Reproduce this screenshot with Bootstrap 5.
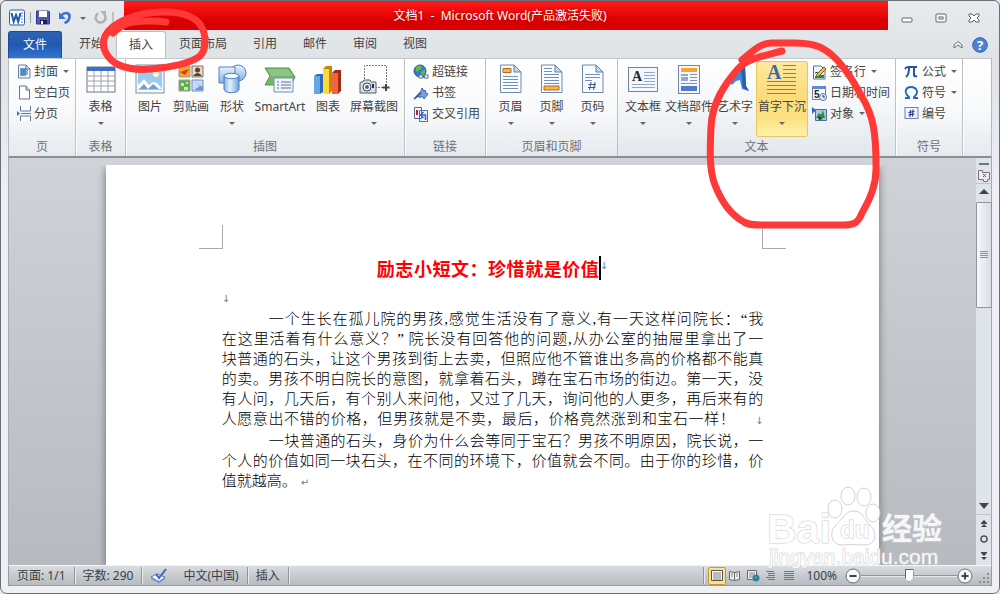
<!DOCTYPE html>
<html lang="zh-CN">
<head>
<meta charset="utf-8">
<meta name="viewport" content="width=device-width, initial-scale=1">
<title>文档1 - Microsoft Word</title>
<link href="https://cdn.jsdelivr.net/npm/bootstrap@5.3.0/dist/css/bootstrap.min.css" rel="stylesheet">
<style>
html,body{height:100%}
body{font-family:"Noto Sans","Noto Sans CJK SC",sans-serif;font-size:12px;line-height:18px;color:#444;background:#e4e7ea;overflow:hidden}
button,a{white-space:nowrap}
button{border:0;background:none;padding:0;color:inherit}
svg{display:block;flex:none}
.window{min-height:100vh;border:1px solid #6b7078;border-radius:6px 6px 7px 7px;padding:0 7px 7px;background:linear-gradient(#e8ebed,#dfe3e6 60px,#eef0f4 200px)}
.titlebar{height:29px}
.quick{width:116px;padding:8px 0 0 1px;gap:4px}
.red-title{height:29px;padding-right:12px;background:linear-gradient(#ff1c1c,#f00c0c 10px,#d80000 20px,#d80000);color:#fff;text-shadow:0 0 2px #900;line-height:30px}
.win-btns{width:104px;padding:10px 12px 0 13px}
.tabs{height:28px;padding-top:1px}
.tabs a{color:#3d4248;text-decoration:none;line-height:26px;padding:0 13px;height:27px}
.tabs .file-tab{width:54px;padding:0;margin-right:4px;text-align:center;color:#fff;border:1px solid #1d4a9c;border-bottom:0;border-radius:3px 3px 0 0;background:linear-gradient(#2f62b6,#2358b0 50%,#2f76d2)}
.tabs .open-tab{background:#fff;border:1px solid #b8bec5;border-bottom:0;border-radius:3px 3px 0 0;padding:0 12px}
.ribbon{height:100px;border:1px solid #b4bac1;border-top-color:#c4c9ce;border-bottom:2px solid #8b9097;background:linear-gradient(#fff,#f9fafb 50%,#e6eaee)}
.grp{border-right:1px solid #bcc2c8;box-shadow:1px 0 #fff;flex:none;padding-top:2px}
.grp .tools{height:77px}
.grp-name{text-align:center;color:#6d7278}
.big{display:flex;flex-direction:column;align-items:center;padding-top:3px;height:76px;flex:none}
.big svg.pic{margin-bottom:2px}
.big .caret{margin-top:6px}
.caret{width:0;height:0;border:3px solid transparent;border-top-color:#666;border-bottom:0;flex:none}
.small-btn{display:flex;align-items:center;gap:3px;height:21px}
.small-btn .caret{margin-left:2px}
.lit{background:linear-gradient(#fde9a0,#fcdc7c 45%,#fbe07f 75%,#fff4b0);box-shadow:inset 0 0 0 1px #e9c65b;border-radius:3px}
.w40{width:40px}.w41{width:41px}.w42{width:42px}.w50{width:50px}.w52{width:52px}.w56{width:56px}
.text-grp{background:linear-gradient(#fff,#f4f6f8 50%,#e2e7ec)}
.desk{background:linear-gradient(#cfd2d6,#b7babf);border-left:1px solid #a7abb1;padding-top:7px}
.paper{width:80%;max-width:774px;background:#fff;box-shadow:0 3px 8px #6a6e74;padding:60px 12% 0;clip-path:inset(0 -9px 0 -9px)}
.corner{width:24px;height:24px;border-bottom:1px solid #aaa}
.corner.l{border-right:1px solid #aaa;margin-left:-23px}
.corner.r{border-left:1px solid #aaa;margin-right:-23px}
.doc-title{margin:7px 0 9px;font:bold 18px/24px "Noto Sans CJK SC",sans-serif;color:#f00;white-space:nowrap}
.doc-title .words{width:222px;text-align-last:justify}
.cursor{width:2px;height:24px;margin-right:-1px;background:#000}
.pm{font:normal 10px/20px "DejaVu Sans",sans-serif;color:#777}
.story{font:15px/20px "Liberation Serif","Noto Sans CJK SC",serif;font-weight:300;color:#000;margin:0}
.ln{display:block;text-align-last:justify;white-space:nowrap}
.ln.first{padding-left:47px}
.ln.end{text-align-last:left}
.tail{display:inline-block;width:28px;text-align-last:right}
.scroll{width:16px;background:#dfe4eb;border-right:1px solid #a4a9b0;color:#444}
.thumb{height:106px;border:1px solid #8f959f;border-radius:1px;background:linear-gradient(90deg,#f6f8fa,#d8dde4);width:16px}
.status{height:21px;border:1px solid #969ba2;border-top-color:#f3f4f5;background:linear-gradient(#d9dde1,#c6cbd0 50%,#b7bcc2);color:#3b3f45;line-height:19px}
.cell{border-right:1px solid #90959b;box-shadow:1px 0 #e9ebed;height:17px;line-height:17px}
.view{width:18px;height:18px;display:grid;place-items:center}
.view.on{background:#fbe189;border:1px solid #c89a35;border-radius:2px}
.zoomer{appearance:none;width:96px;height:14px;background:linear-gradient(transparent 6px,#8d949c 6px,#8d949c 7px,#e9ecef 7px,#e9ecef 8px,transparent 8px);margin:0}
.zoomer::-webkit-slider-thumb{appearance:none;width:9px;height:13px;background:#fff;border:1px solid #666;clip-path:polygon(0 0,100% 0,100% 65%,50% 100%,0 65%)}
.over{position:absolute;left:0;top:0;pointer-events:none}
.brand{position:absolute;right:52px;bottom:22px;width:180px;height:88px;pointer-events:none}
.brand text{font-family:"Liberation Sans","Noto Sans CJK SC",sans-serif;fill:#fff;fill-opacity:.88;stroke:#cfd1d4;stroke-width:1;paint-order:stroke}
</style>
</head>
<body>
<!-- shared symbols -->
<svg width="0" height="0" class="position-absolute" aria-hidden="true">
<defs>
<linearGradient id="gb" x2="0" y2="1"><stop stop-color="#e9f3fd"/><stop offset="1" stop-color="#7fb0e6"/></linearGradient>
<linearGradient id="cyl"><stop stop-color="#7fb2ec"/><stop offset=".4" stop-color="#e6f2fe"/><stop offset="1" stop-color="#6da2e0"/></linearGradient>
<symbol id="sheet" viewBox="0 0 24 30"><path d="M1.500 1H15l7 7v20.500H1.500z" fill="#f8fbff" stroke="#7088a8"/><path d="M15 1v7h7z" fill="#c5d9ef" stroke="#5e7da5"/></symbol>
</defs>
</svg>
<div class="window d-flex flex-column">
<header class="titlebar d-flex">
  <div class="quick d-flex align-items-start">
    <svg width="17" height="17" viewBox="0 0 17 17"><rect x=".5" y="1" width="15" height="15" rx="1.500" fill="#fff" stroke="#2a62a5"/><path d="M12 4h2M12 7h2M12 10h2M12 13h2" stroke="#5b8ac4"/><path d="M2.500 4l2.200 8.500L7 6l2.200 6.500L11.500 4" fill="none" stroke="#1d5aa8" stroke-width="2"/></svg>
    <svg width="2" height="16"><path d="M.5 3v11" stroke="#999"/></svg>
    <button aria-label="保存"><svg width="14" height="16" viewBox="0 0 14 16"><path d="M.5 2h12l1 1v12H.500z" fill="#5258b8" stroke="#34388c"/><path d="M3 2h8v6H3z" fill="#fff"/><path d="M4 11h7v4H4z" fill="#1d2246"/><path d="M5 12h2v3H5z" fill="#fff"/></svg></button>
    <button aria-label="撤销" class="ms-1"><svg width="14" height="16" viewBox="0 0 14 16"><path d="M3 7c4-5 9-3 8.500 1S8 13.500 6.500 14" fill="none" stroke="#3d74cb" stroke-width="2.600"/><path d="M1 3v7h7z" fill="#3d74cb"/></svg></button>
    <span class="caret mt-2 mx-1 text-dark"></span>
    <button aria-label="重复"><svg width="14" height="16" viewBox="0 0 14 16"><path d="M4 4c-5 5-1 10 3 9.500S13 9 10 5" fill="none" stroke="#aeb1b5" stroke-width="2.400"/><path d="M6 2h6v6z" fill="#aeb1b5"/></svg></button>
    <svg width="2" height="16"><path d="M1 3v11" stroke="#999"/></svg>
  </div>
  <div class="red-title flex-grow-1 text-center">文档1&nbsp; -&nbsp; Microsoft Word(产品激活失败)</div>
  <div class="win-btns d-flex justify-content-between align-items-start">
    <button aria-label="最小化"><svg width="12" height="14"><rect x="1" y="7" width="10" height="4" rx="1" fill="#fff" stroke="#5e6269"/></svg></button>
    <button aria-label="还原"><svg width="12" height="14"><rect x="1" y="3" width="10" height="8" rx="1" fill="#fff" stroke="#5e6269"/><rect x="4" y="6" width="4" height="2" fill="#fff" stroke="#5e6269"/></svg></button>
    <button aria-label="关闭"><svg width="12" height="14"><path d="M1 3h3l2 2 2-2h3v2L9 7l2 2v2H8L6 9l-2 2H1V9l2-2-2-2z" fill="#fff" stroke="#5e6269"/></svg></button>
  </div>
</header>
<nav class="tabs d-flex" aria-label="功能区选项卡">
  <a href="#" class="file-tab">文件</a><a href="#">开始</a><a href="#" class="open-tab" aria-current="page">插入</a><a href="#">页面布局</a><a href="#">引用</a><a href="#">邮件</a><a href="#">审阅</a><a href="#">视图</a>
  <div class="ms-auto d-flex align-items-center gap-2 pe-1">
    <button aria-label="折叠功能区"><svg width="12" height="12"><path d="M2 6l4-3.500L10 6v3L6 6 2 9z" fill="#fff" stroke="#60656c"/></svg></button>
    <button aria-label="帮助"><svg width="16" height="16"><circle cx="8" cy="8" r="7.300" fill="#4b83d2" stroke="#2e5fae"/><text x="8" y="12.500" text-anchor="middle" font-size="13" font-weight="bold" font-family="Noto Sans" fill="#fff">?</text></svg></button>
  </div>
</nav>
<section class="ribbon d-flex">
  <div class="grp" style="width:67px"><div class="tools ps-2">
    <button class="small-btn"><svg width="14" height="15" viewBox="0 0 14 15"><path d="M1.500 1H9l4 4v9H1.500z" fill="#f2f8ff" stroke="#6482a8"/><path d="M3 4h6v8H3z" fill="#6aa0dd"/><path d="M9 1v4h4M4 6h7M4 8h7M4 10h7" fill="none" stroke="#47729f"/></svg>封面<span class="caret"></span></button>
    <button class="small-btn"><svg width="14" height="15" viewBox="0 0 14 15"><path d="M2.500 1H9l3.500 4v9h-10z" fill="#fff" stroke="#5f7694"/><path d="M9 1v4h3.500" fill="#c5d9ef" stroke="#5f7694"/></svg>空白页</button>
    <button class="small-btn"><svg width="14" height="15" viewBox="0 0 14 15"><path d="M3.500 0v5h10V0M3.500 15v-5h10v5" fill="#fff" stroke="#60789a"/><path d="M4 7.500h10" stroke="#60789a"/><path d="M0 5l3 2.500L0 10z" fill="#3b6fc4"/></svg>分页</button>
  </div><div class="grp-name">页</div></div>
  <div class="grp" style="width:50px"><div class="tools d-flex justify-content-center">
    <button class="big"><svg class="pic" width="30" height="32" viewBox="0 0 30 32"><rect x="1" y="3" width="28" height="25" fill="#fff" stroke="#6c7684"/><path d="M1 3h28v4H1z" fill="#3a6fce"/><path d="M1 12h28M1 17h28M1 22h28M8 7v21M15 7v21M22 7v21" stroke="#9ba4b0"/></svg>表格<span class="caret"></span></button>
  </div><div class="grp-name">表格</div></div>
  <div class="grp" style="width:279px"><div class="tools d-flex ps-1">
    <button class="big w40"><svg class="pic" width="30" height="32" viewBox="0 0 30 32"><rect x="1" y="1" width="28" height="28" fill="#f6f9fc" stroke="#7b91a6"/><rect x="3" y="4" width="24" height="22" fill="#9ccbf2"/><circle cx="21" cy="10" r="3" fill="#fff3c8"/><path d="M3 25v-4l6-6 5 6 4-3 4 1 5 6z" fill="#fff"/><path d="M4 25l5-5 4 5 5-5 6 5z" fill="#6c9fd4"/></svg>图片</button>
    <button class="big w42"><svg class="pic" width="28" height="32" viewBox="0 0 28 32"><path d="M2 2h11v11H2z" fill="#f4a72d" stroke="#999"/><path d="M3 8l9-3-4 6z" fill="#d53b12"/><path d="M15 2h11v11H15z" fill="#f0d8bd" stroke="#777"/><circle cx="20.500" cy="6" r="2.500" fill="#6b3d22"/><path d="M16 12q4.500-6 9 0z" fill="#444"/><path d="M2 16h11v11H2z" fill="#5daa58" stroke="#999"/><path d="M4 19h3v3H4zM9 18h2v2H9zM7 23h4v3H7z" fill="#d7ed7b"/><path d="M15 16h11v11H15z" fill="#c5dcfb" stroke="#6e8fc2"/><path d="M17 18l6 4-6 4 9 0v-3z" fill="#6c92dd"/></svg>剪贴画</button>
    <button class="big w40"><svg class="pic" width="32" height="32" viewBox="0 0 32 32"><circle cx="22" cy="9" r="8" fill="url(#gb)" stroke="#5684bc"/><path d="M3 3h16v16H3z" fill="url(#gb)" stroke="#5684bc"/><path d="M8 12v13c0 5 15 5 15 0V12" fill="url(#cyl)" stroke="#4d7db8"/><ellipse cx="15.500" cy="12" rx="7.500" ry="2.700" fill="#eef7ff" stroke="#4d7db8"/></svg>形状<span class="caret"></span></button>
    <button class="big w56"><svg class="pic" width="34" height="32" viewBox="0 0 34 32"><path d="M2 4h24l6 9-4 8H2l5-9z" fill="#72b46a" stroke="#559448"/><path d="M4 5h21l5 7H8z" fill="#a0d293" opacity=".6"/><path d="M11 14h19v14H11z" fill="#eef5fa" stroke="#7592ae"/><path d="M14 18h2M18 18h10M14 21h2M18 21h10M14 24h2M18 24h10" stroke="#5b7497"/></svg>SmartArt</button>
    <button class="big w40"><svg class="pic" width="30" height="32" viewBox="0 0 30 32"><path d="M1 12l3-2h6v18l-3 2H1z" fill="#2e6bb7"/><path d="M1 12h6v18H1z" fill="#66a6e8"/><path d="M10 5l3-3h6v25l-3 3h-6z" fill="#c08a00"/><path d="M10 5h6v25h-6z" fill="#ffd83c"/><path d="M19 9l3-3h6v21l-3 3h-6z" fill="#a32b15"/><path d="M19 9h6v21h-6z" fill="#ef6541"/></svg>图表</button>
    <button class="big w52"><svg class="pic" width="32" height="32" viewBox="0 0 32 32"><path d="M6.500 15V1.500h22V22M17 23.500h9" fill="none" stroke="#777" stroke-dasharray="2 1"/><path d="M28 20v7M24.500 23.500h7" stroke="#444" stroke-width="2"/><path d="M2 19q0-1 1-1h2l1-2h6l1 2h5v11H2z" fill="#d9dde2" stroke="#555d68"/><circle cx="9" cy="23" r="4" fill="#f7fbff" stroke="#3d4857"/><circle cx="9" cy="23" r="2" fill="#37679f"/><path d="M15 20v4" stroke="#333" stroke-width="2"/></svg>屏幕截图<span class="caret"></span></button>
  </div><div class="grp-name">插图</div></div>
  <div class="grp" style="width:81px"><div class="tools ps-2">
    <button class="small-btn"><svg width="16" height="16" viewBox="0 0 16 16"><circle cx="7" cy="7" r="6" fill="#3f79ca" stroke="#2c5793"/><path d="M3 3q4-3 6 0l-2 3-4 2zM8 8l4-3v4l-3 3z" fill="#62bb50"/><path d="M6 11h4v3H6zM11 11h4v3h-4zM9 12.500h3" fill="#fff" stroke="#526e8e"/></svg>超链接</button>
    <button class="small-btn"><svg width="16" height="16" viewBox="0 0 16 16"><path d="M1 14L8 6l1-3 2 3 1-1 1 3 2 1-4 5-2-3-2 2-1-2z" fill="#7c9de0" stroke="#3e64b4"/><path d="M1 14l7-6" stroke="#3156a2" stroke-width="1.500"/></svg>书签</button>
    <button class="small-btn"><svg width="16" height="16" viewBox="0 0 16 16"><path d="M1.500 1.500h7v11h-7zM6.500 4.500h8v11h-8z" fill="#eef5ff" stroke="#536f99"/><path d="M4 4v5" stroke="#d13" stroke-width="2"/><path d="M12.500 14V9H8M10.500 6L7.500 9l3 3" fill="none" stroke="#2d66c9" stroke-width="1.500"/></svg>交叉引用</button>
  </div><div class="grp-name">链接</div></div>
  <div class="grp" style="width:132px"><div class="tools d-flex ps-1">
    <button class="big w41"><svg class="pic" width="24" height="32" viewBox="0 0 24 32"><use href="#sheet" width="24" height="30"/><path d="M4 4.500h8v4H4z" fill="#f7b357" stroke="#b06a19"/><path d="M4 12.500h15M4 15.500h15M4 18.500h15M4 21.500h15M4 24.500h15" stroke="#7190bd"/></svg>页眉<span class="caret"></span></button>
    <button class="big w41"><svg class="pic" width="24" height="32" viewBox="0 0 24 32"><use href="#sheet" width="24" height="30"/><path d="M4 22h15v4H4z" fill="#f7b357" stroke="#b06a19"/><path d="M4 4.500h8M4 7.500h8M4 10.500h15M4 13.500h15M4 16.500h15M4 19.500h15" stroke="#7190bd"/></svg>页脚<span class="caret"></span></button>
    <button class="big w41"><svg class="pic" width="24" height="32" viewBox="0 0 24 32"><use href="#sheet" width="24" height="30"/><path d="M4 10.500h15M4 13.500h15M4 16.500h7" stroke="#7190bd"/><path d="M10 18L8.500 26M14 18l-1.500 8M7.500 20.500H15M7 23.500h7.500" stroke="#315ba4" fill="none"/></svg>页码<span class="caret"></span></button>
  </div><div class="grp-name">页眉和页脚</div></div>
  <div class="grp text-grp" style="width:278px"><div class="tools d-flex ps-1">
    <button class="big w42"><svg class="pic" width="32" height="32" viewBox="0 0 32 32"><rect x="1.500" y="3.500" width="29" height="24" fill="#f3f8fe" stroke="#73839b"/><path d="M17 8.500h11M17 11.500h11M17 14.500h11M17 17.500h11M5 20.500h23M5 23.500h23" stroke="#92a8c7"/><text x="5" y="17" font-size="14" font-weight="bold" font-family="Liberation Serif" fill="#222">A</text></svg>文本框<span class="caret"></span></button>
    <button class="big w50"><svg class="pic" width="24" height="32" viewBox="0 0 24 32"><rect x="1.500" y="1.500" width="21" height="28" fill="#f5f9ff" stroke="#6e87ab"/><path d="M4 4h16v4H4z" fill="#f9a52b"/><path d="M4 10h7v2H4zM4 13h7v4H4z" fill="#8fa9d0"/><path d="M13 10.500h7M13 13.500h7M13 16.500h7M4 19.500h16" stroke="#7b93ba"/><path d="M4 22h16v5H4z" fill="#4f7cc8"/></svg>文档部件<span class="caret"></span></button>
    <button class="big w42"><svg class="pic" width="32" height="32" viewBox="0 0 32 32"><path d="M10 18L21 6l5-4 1 20 3 5-7-2-2-9-4 1-4 4z" fill="#3f88df"/><path d="M22 5l4-3 1 20 3 5-6-3z" fill="#2460ad"/></svg>艺术字<span class="caret"></span></button>
    <button class="big w52 lit"><svg class="pic" width="32" height="32" viewBox="0 0 32 32"><path d="M17 1.500h13M17 5.500h13M17 9.500h13M17 13.500h13M1 17.500h29M1 21.500h29M1 25.500h29M1 29.500h29" stroke="#5c86c8"/><text x="1" y="15" font-size="20" font-weight="bold" font-family="Liberation Serif" fill="#3d67ae">A</text></svg>首字下沉<span class="caret"></span></button>
    <div class="ps-1">
    <button class="small-btn"><svg width="15" height="16" viewBox="0 0 15 16"><path d="M1.500 2H9l4 4v9H1.500z" fill="#eef4fb" stroke="#607189"/><path d="M3 9q3-2 4 1t5 1" stroke="#333" fill="none"/><path d="M5 10l7-7 2 2-7 7-3 1z" fill="#f5bd3c" stroke="#755f25"/><path d="M3 13h9" stroke="#388a3b" stroke-width="2"/></svg>签名行<span class="caret"></span></button>
    <button class="small-btn"><svg width="15" height="16" viewBox="0 0 15 16"><path d="M.5 1.500h13v13H.500z" fill="#fff" stroke="#6281ae"/><path d="M1 1h13v3H1z" fill="#5d8bcc"/><text x="2" y="13" font-size="10" font-weight="bold" font-family="Liberation Sans" fill="#222">5</text><circle cx="11" cy="12" r="3.500" fill="#e3f0ff" stroke="#54749e"/><path d="M11 10v2h2" stroke="#333" fill="none"/></svg>日期和时间</button>
    <button class="small-btn"><svg width="15" height="16" viewBox="0 0 15 16"><path d="M3.500 3.500h11v11h-11z" fill="#a7c8e8" stroke="#4f6e97"/><path d="M0 1l4 3-4 4z" fill="#2567c7"/><path d="M4 12l3-5 2 2 2-5 2 8z" fill="#348b36"/><path d="M6 10l5 3-4 1z" fill="#173e1c"/></svg>对象<span class="caret"></span></button>
    </div>
  </div><div class="grp-name">文本</div></div>
  <div class="grp" style="width:67px"><div class="tools ps-2">
    <button class="small-btn"><svg width="15" height="15" viewBox="0 0 15 15"><path d="M1 5q1-2 3-2h9M5 4q0 7-3 9M10 4v7q0 2 3 1" fill="none" stroke="#2555a8" stroke-width="2"/></svg>公式<span class="caret"></span></button>
    <button class="small-btn"><svg width="15" height="15" viewBox="0 0 15 15"><path d="M1 13h4v-1C-1 7 2 2 7 2s9 5 3 10v1h4" fill="none" stroke="#2463bd" stroke-width="1.800"/></svg>符号<span class="caret"></span></button>
    <button class="small-btn"><svg width="15" height="15" viewBox="0 0 15 15"><rect x="1" y="1.500" width="13" height="11" fill="#edf4ff" stroke="#6b86ae"/><path d="M6.500 4L6 11M9 3.500L8.500 10.500M4.500 6.500l6-1M4.500 9l6-1" stroke="#252a8a"/></svg>编号</button>
  </div><div class="grp-name">符号</div></div>
</section>
<main class="d-flex flex-grow-1">
  <div class="desk flex-grow-1 d-flex justify-content-center">
    <article class="paper">
      <div class="d-flex justify-content-between"><span class="corner l"></span><span class="corner r"></span></div>
      <h1 class="doc-title d-flex justify-content-center"><span class="words">励志小短文：珍惜就是价值</span><span class="cursor"></span><span class="pm">↓</span></h1>
      <div class="pm">↓</div>
      <p class="story"><span class="ln first">一个生长在孤儿院的男孩,感觉生活没有了意义,有一天这样问院长：“我</span><span class="ln">在这里活着有什么意义？” 院长没有回答他的问题,从办公室的抽屉里拿出了一</span><span class="ln">块普通的石头，让这个男孩到街上去卖，但照应他不管谁出多高的价格都不能真</span><span class="ln">的卖。男孩不明白院长的意图，就拿着石头，蹲在宝石市场的街边。第一天，没</span><span class="ln">有人问，几天后，有个别人来问他，又过了几天，询问他的人更多，再后来有的</span><span class="ln">人愿意出不错的价格，但男孩就是不卖，最后，价格竟然涨到和宝石一样！<span class="pm tail">↓</span></span></p>
      <p class="story"><span class="ln first">一块普通的石头，身价为什么会等同于宝石？男孩不明原因，院长说，一</span><span class="ln">个人的价值如同一块石头，在不同的环境下，价值就会不同。由于你的珍惜，价</span><span class="ln end">值就越高。<span class="pm ps-1">↵</span></span></p>
    </article>
  </div>
  <aside class="scroll d-flex flex-column align-items-center pt-1" aria-label="垂直滚动条">
    <svg width="16" height="40" viewBox="0 0 16 40"><path d="M3 1h10v2H3z" fill="#777"/><path d="M2.500 8.500h4v2h7v7h-2v2h-4v-2h-5z" fill="#f3e9ec" stroke="#777"/><path d="M7 12l3 3M10 12l-3 3" stroke="#8b4a55"/><path d="M0 21.500h16" stroke="#bfc5cd"/><path d="M3 32h10L8 27z" fill="#444"/></svg>
    <div class="thumb d-grid" style="place-items:center"><svg width="8" height="8"><path d="M0 .5h8M0 2.500h8M0 4.500h8M0 6.500h8" stroke="#8c929b"/></svg></div>
    <svg class="mt-auto" width="16" height="64" viewBox="0 0 16 64"><path d="M3 2h10L8 8z" fill="#444"/><path d="M0 13.500h16" stroke="#bfc5cd"/><path d="M5 22l3-3 3 3zM5 26l3-3 3 3zM5 52h6l-3 3zM5 56h6l-3 3zM5 22h6v1H5zM5 51h6v1H5z" fill="#444"/><circle cx="8" cy="38" r="3" fill="none" stroke="#555" stroke-width="1.500"/></svg>
  </aside>
</main>
<footer class="status d-flex align-items-center">
  <span class="cell px-2 text-nowrap">页面: 1/1</span><span class="cell px-2 text-nowrap">字数: 290</span>
  <span class="cell px-2 text-nowrap d-flex"><button aria-label="校对" class="me-3"><svg width="17" height="16" viewBox="0 0 17 16"><path d="M1 9l6-3 8 3-6 5z" fill="#fff" stroke="#5574b6"/><path d="M1 9v2l8 4 6-4V9l-6 4z" fill="#6f90cf"/><path d="M6 6l3 4 7-9" fill="none" stroke="#3868c8" stroke-width="2"/></svg></button>中文(中国)</span>
  <span class="cell px-2 text-nowrap">插入</span>
  <span class="cell ms-auto me-1"></span>
  <button class="view on" aria-label="页面视图"><svg width="12" height="12"><path d="M.5.500h11v10H.500z" fill="#fff" stroke="#555"/><path d="M2 3h8M2 5h8M2 7h8M2 9h8" stroke="#777"/></svg></button>
  <button class="view" aria-label="阅读版式"><svg width="12" height="12"><path d="M.5 1.500l5 1 5-1v8l-5 1-5-1zM5.500 2v8" fill="#eee" stroke="#666"/><path d="M2 4h2M2 6h2M7 4h2M7 6h2" stroke="#888"/></svg></button>
  <button class="view" aria-label="Web 版式"><svg width="13" height="12"><path d="M.5.500h9v9h-9z" fill="#eee" stroke="#666"/><path d="M2 3h6M2 5h6M2 7h6" stroke="#888"/><circle cx="9" cy="8" r="3.500" fill="#347ab4"/><path d="M7 7l3-1v3z" fill="#55aa55"/></svg></button>
  <button class="view" aria-label="大纲视图"><svg width="12" height="12"><path d="M1 1.500h8M3 3.500h7M3 5.500h7M1 7.500h9M3 9.500h7" stroke="#777"/></svg></button>
  <button class="view" aria-label="草稿"><svg width="12" height="12"><path d="M1 1.500h10M1 3.500h10M1 5.500h10M1 7.500h10M1 9.500h10" stroke="#777"/></svg></button>
  <button class="ms-2 me-2">100%</button>
  <button aria-label="缩小"><svg width="16" height="16"><circle cx="8" cy="8" r="7" fill="#f5f6f7" stroke="#6a6e74"/><path d="M4.500 8h7" stroke="#444" stroke-width="2"/></svg></button>
  <input class="zoomer" type="range" min="0" max="200" value="100" aria-label="显示比例">
  <button aria-label="放大"><svg width="16" height="16"><circle cx="8" cy="8" r="7" fill="#f5f6f7" stroke="#6a6e74"/><path d="M4.500 8h7M8 4.500v7" stroke="#444" stroke-width="2"/></svg></button>
  <svg class="ms-1" width="14" height="16"><path d="M10 5h2v2h-2zM6 9h2v2H6zM10 9h2v2h-2zM2 13h2v2H2zM6 13h2v2H6zM10 13h2v2h-2z" fill="#8b9097"/></svg>
</footer>
</div>
<!-- watermark -->
<svg class="brand" viewBox="0 0 180 88"><text x="-1" y="59" font-size="41" font-weight="bold">Bai</text>
<g fill="#fff" fill-opacity=".88" stroke="#cfd1d4"><ellipse cx="67" cy="25" rx="7" ry="9"/><ellipse cx="80" cy="12" rx="7" ry="9"/><ellipse cx="96" cy="13" rx="7" ry="9"/><ellipse cx="105" cy="29" rx="7" ry="9"/><path d="M86 27c9 0 10 9 16 14 8 8 6 20-5 20-6 0-16-1-22 0-11 1-15-12-7-20 7-6 9-14 18-14z"/></g>
<text x="72" y="54" font-size="24" font-weight="bold">du</text><text x="114" y="55" font-size="30" font-weight="bold">经验</text><text x="1" y="80" font-size="21">jingyan.baidu.com</text></svg>
<!-- hand-drawn marker rings -->
<svg class="over" width="1000" height="260" viewBox="0 0 1000 260" fill="none" stroke="#ff3838" stroke-width="7" stroke-linecap="round" stroke-linejoin="round">
<path d="M113 33q10-10 20-11 18-2 33 0"/><path d="M166 12c-28-1-54 10-61 24-5 12 3 24 14 29 13 6 28 5 41 3 17-2 31-5 40-12 7-7 6-22 1-30-5-9-20-15-38-14"/>
<path d="M782 51c-19 5-36 8-45 19-13 15-25 33-26 57-1 22-2 43 4 58 7 18 16 30 29 37 6 4 16 3 27 3h73c10 0 14-2 18-12 8-14 15-29 14-48 0-29-2-49-14-68-8-15-18-31-29-41-12-11-23-13-39-13h-22c-12 0-19 8-30 17"/>
</svg>
<script src="https://cdn.jsdelivr.net/npm/bootstrap@5.3.0/dist/js/bootstrap.bundle.min.js"></script>
</body>
</html>
